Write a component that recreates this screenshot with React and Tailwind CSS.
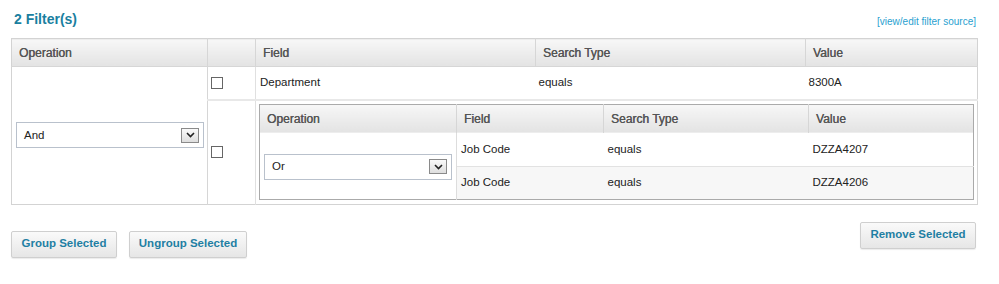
import React from "react";

const headCell =
  "h-[28px] border-l border-[#d6d6d6] bg-gradient-to-b from-[#f7f7f7] to-[#e3e3e3] px-[7px] text-left align-middle text-[12px] font-normal text-[#555] [text-shadow:0.3px_0_0_#555] first:border-l-0";

const Select = ({ value, className }) => (
  <div
    className={`flex h-[26px] items-center justify-between border border-[#b9c1cc] bg-white pl-[7px] pr-[4px] text-[11.5px] text-[#222] ${className}`}
  >
    <span>{value}</span>
    <span className="flex h-[15px] w-[18px] items-center justify-center border border-[#8a8a8a] bg-gradient-to-b from-[#fafafa] to-[#dedede]">
      <svg width="9" height="6" viewBox="0 0 9 6">
        <path d="M1 1 L4.5 4.5 L8 1" fill="none" stroke="#222" strokeWidth="1.6" />
      </svg>
    </span>
  </div>
);

const Checkbox = () => (
  <span className="block h-[12px] w-[12px] border border-[#666] bg-white" />
);

const Button = ({ children, className = "" }) => (
  <button
    className={`h-[27px] whitespace-nowrap rounded-[2px] border border-[#cfcfcf] bg-gradient-to-b from-[#fafafa] to-[#e6e6e6] px-0 text-center text-[11.5px] font-bold text-[#1f7fa3] shadow-[0_1px_1px_rgba(0,0,0,0.08)] ${className}`}
  >
    {children}
  </button>
);

const InnerGroup = () => (
  <table className="w-[714px] table-fixed border-collapse border border-[#aaa] shadow-[inset_0_0_0_1px_#e6e6e6]">
    <colgroup>
      <col className="w-[197px]" />
      <col className="w-[147px]" />
      <col className="w-[205px]" />
      <col className="w-[165px]" />
    </colgroup>
    <thead>
      <tr>
        <th className={`${headCell} h-[29px]`}>Operation</th>
        <th className={`${headCell} h-[29px]`}>Field</th>
        <th className={`${headCell} h-[29px]`}>Search Type</th>
        <th className={`${headCell} h-[29px]`}>Value</th>
      </tr>
    </thead>
    <tbody className="text-[11.5px] text-[#222]">
      <tr className="h-[33px] bg-white">
        <td rowSpan={2} className="border-r border-[#ddd] bg-white px-[4px] pt-[2px] align-middle">
          <Select value="Or" className="w-[188px]" />
        </td>
        <td className="px-[4px]">Job Code</td>
        <td className="px-[4px]">equals</td>
        <td className="px-[4px]">DZZA4207</td>
      </tr>
      <tr className="h-[33px] border-t border-[#e2e2e2] bg-[#f7f7f7]">
        <td className="px-[4px]">Job Code</td>
        <td className="px-[4px]">equals</td>
        <td className="px-[4px]">DZZA4206</td>
      </tr>
    </tbody>
  </table>
);

const App = () => {
  return (
    <div className="h-[284px] w-[999px] bg-white font-['Liberation_Sans',Arial,sans-serif]">
      <div className="flex items-end justify-between pl-[14px] pr-[23px] pt-[11px]">
        <h1 className="text-[14px] font-bold leading-[17px] text-[#1a7fa0]">2 Filter(s)</h1>
        <a href="#" className="mb-[-1px] text-[10px] text-[#2a9fd0]">
          [view/edit filter source]
        </a>
      </div>

      <div className="pl-[11px] pt-[10px]">
        <table className="w-[966px] table-fixed border-collapse border border-[#d3d3d3]">
          <colgroup>
            <col className="w-[196px]" />
            <col className="w-[48px]" />
            <col className="w-[280px]" />
            <col className="w-[270px]" />
            <col className="w-[172px]" />
          </colgroup>
          <thead>
            <tr>
              <th className={headCell}>Operation</th>
              <th className={headCell}></th>
              <th className={headCell}>Field</th>
              <th className={headCell}>Search Type</th>
              <th className={headCell}>Value</th>
            </tr>
          </thead>
          <tbody className="text-[11.5px] text-[#222]">
            <tr className="h-[33px] border-t border-[#d6d6d6]">
              <td rowSpan={2} className="border-r border-[#d6d6d6] px-[4px] align-middle">
                <Select value="And" className="w-[188px]" />
              </td>
              <td className="border-r border-[#e0e0e0] px-[3px]">
                <Checkbox />
              </td>
              <td className="px-[4px]">Department</td>
              <td className="px-[3px]">equals</td>
              <td className="px-[3px]">8300A</td>
            </tr>
            <tr className="border-t-[2px] border-[#e8e8e8]">
              <td className="border-r border-[#e0e0e0] px-[3px] align-middle">
                <Checkbox />
              </td>
              <td colSpan={3} className="pb-[4px] pl-[3px] pt-[3px]">
                <InnerGroup />
              </td>
            </tr>
          </tbody>
        </table>
      </div>

      <div className="flex items-start justify-between pl-[11px] pr-[23px] pt-[17px]">
        <div className="flex gap-[12px] pt-[9px]">
          <Button className="w-[106px]">Group Selected</Button>
          <Button className="w-[118px]">Ungroup Selected</Button>
        </div>
        <Button className="w-[116px]">Remove Selected</Button>
      </div>
    </div>
  );
};

export default App;
